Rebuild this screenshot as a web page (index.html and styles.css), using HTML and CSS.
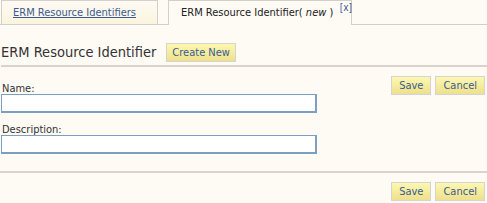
FILE: index.html
```html
<!DOCTYPE html>
<html lang="en">
<head>
    <meta charset="UTF-8">
    <title>ERM Resource Identifier</title>
    <link rel="stylesheet" href="styles.css">
</head>
<body>
    <div class="tabs">
        <div class="tab"><a href="#" class="tab-link">ERM Resource Identifiers</a></div>
        <div class="tab tab-active">ERM Resource Identifier( <i>new</i> )<a href="#" class="tab-close">[x]</a></div>
    </div>

    <div class="title-bar">
        <h1 class="title">ERM Resource Identifier</h1>
        <button class="btn btn-create">Create New</button>
    </div>

    <div class="form">
        <div class="fields">
            <label class="field-label" for="name">Name:</label>
            <input type="text" id="name" class="field-input">
            <label class="field-label" for="desc">Description:</label>
            <input type="text" id="desc" class="field-input">
        </div>
        <div class="actions top-actions">
            <button class="btn">Save</button>
            <button class="btn">Cancel</button>
        </div>
    </div>

    <div class="actions bottom-actions">
        <button class="btn">Save</button>
        <button class="btn">Cancel</button>
    </div>
</body>
</html>
```

FILE: styles.css
```css
body {
    margin: 0;
    background: #fefaf4;
    font-family: "DejaVu Sans Condensed", "DejaVu Sans", sans-serif;
    font-size: 11px;
    color: #333;
}
.tabs {
    display: flex;
    align-items: flex-end;
    height: 24px;
    padding-left: 1px;
    border-bottom: 1px solid #d4d0c8;
}
.tab {
    height: 23px;
    width: 155px;
    border: 1px solid #d4d0c8;
    border-bottom: none;
    background: linear-gradient(#fefaf4, #faf5de);
    line-height: 23px;
}
.tab-link {
    color: #3b5a95;
    margin-left: 11px;
}
.tab-active {
    position: relative;
    margin-left: 10px;
    width: 170px;
    height: 24px;
    margin-bottom: -1px;
    padding-left: 12px;
    background: #fefaf4;
    color: #222;
}
.tab-close {
    position: absolute;
    right: -1px;
    top: -5px;
    font-size: 10px;
    color: #3b5a95;
    text-decoration: none;
}
.title-bar {
    display: flex;
    align-items: center;
    gap: 10px;
    height: 20px;
    margin: 17px 0 0 1px;
    padding-bottom: 3px;
    border-bottom: 2px solid #d8d4cc;
}
.title {
    margin: 0;
    font-size: 14.5px;
    font-weight: normal;
    color: #333;
}
.btn {
    height: 19px;
    padding: 0 7px;
    border: 1px solid #d4d4d4;
    background: linear-gradient(#fdf8b0, #eee08c);
    color: #3b5a95;
    font-family: inherit;
    font-size: 11px;
    cursor: pointer;
}
.btn-create {
    padding: 0 5px;
}
.form {
    display: flex;
    justify-content: space-between;
    padding: 0 2px 0 1px;
    border-bottom: 2px solid #d8d4cc;
    height: 104px;
}
.fields {
    display: flex;
    flex-direction: column;
    padding-top: 15px;
}
.field-label {
    margin-left: 1px;
    height: 12px;
}
.field-input {
    width: 316px;
    height: 19px;
    box-sizing: border-box;
    border: 2px solid #7d9ec0;
    border-width: 1px 2px 2px 1px;
    margin-bottom: 10px;
    background: #fff;
}
.actions {
    display: flex;
    gap: 4px;
}
.top-actions {
    margin-top: 9px;
}
.bottom-actions {
    justify-content: flex-end;
    padding: 9px 2px 0 0;
}
```
